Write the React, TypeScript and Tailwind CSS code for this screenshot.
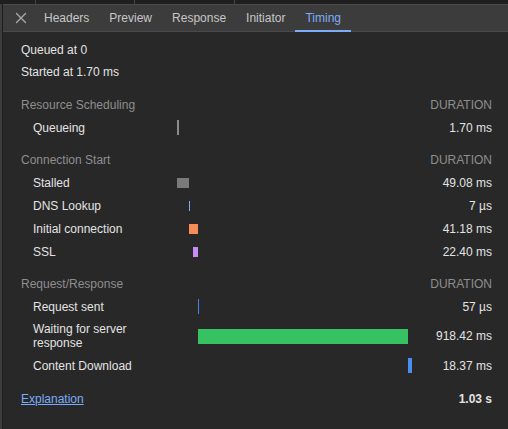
import React from 'react';

const TOTAL_MS = 1028.8;
const TRACK_PX = 235;

type Row = { label: string; start: number; end: number; color: string; min?: number; value: string };
type Section = { title: string; barH: string; rows: Row[] };

const sections: Section[] = [
  {
    title: 'Resource Scheduling',
    barH: 'h-[15px]',
    rows: [{ label: 'Queueing', start: 0, end: 1.7, color: 'bg-[#8b8b8b]', min: 2, value: '1.70 ms' }],
  },
  {
    title: 'Connection Start',
    barH: 'h-[10px]',
    rows: [
      { label: 'Stalled', start: 1.7, end: 50.78, color: 'bg-[#7a7a7a]', value: '49.08 ms' },
      { label: 'DNS Lookup', start: 50.78, end: 50.787, color: 'bg-[#7cacf8]', value: '7 µs' },
      { label: 'Initial connection', start: 50.78, end: 91.96, color: 'bg-[#f58d58]', value: '41.18 ms' },
      { label: 'SSL', start: 69.56, end: 91.96, color: 'bg-[#c98bf5]', value: '22.40 ms' },
    ],
  },
  {
    title: 'Request/Response',
    barH: 'h-[15px]',
    rows: [
      { label: 'Request sent', start: 91.96, end: 92.02, color: 'bg-[#3e86f0]', value: '57 µs' },
      { label: 'Waiting for server response', start: 92.02, end: 1010.44, color: 'bg-[#36c263]', value: '918.42 ms' },
      { label: 'Content Download', start: 1010.44, end: 1028.81, color: 'bg-[#4a8ff0]', value: '18.37 ms' },
    ],
  },
];

const toPx = (ms: number) => (ms / TOTAL_MS) * TRACK_PX;

const CloseIcon = () => (
  <svg width="12" height="12" viewBox="0 0 12 12" fill="none" stroke="#a8a8a8" strokeWidth="1.4" strokeLinecap="round">
    <path d="M1.5 1.5 L10.5 10.5 M10.5 1.5 L1.5 10.5" />
  </svg>
);

const tabs = ['Headers', 'Preview', 'Response', 'Initiator', 'Timing'];

const TimingRow: React.FC<{ row: Row; barH: string }> = ({ row, barH }) => {
  const left = toPx(row.start);
  const width = Math.max(row.min ?? 1, toPx(row.end - row.start));
  return (
    <div className="flex items-center min-h-[23px] pl-3 py-1">
      <div className="w-[144px] shrink-0 pr-5 leading-[14px] text-[#e3e3e3]">{row.label}</div>
      <div className="relative w-[235px] shrink-0 h-[15px] flex items-center">
        <div className={`absolute ${barH} ${row.color}`} style={{ left, width }} />
      </div>
      <div className="flex-1 text-right text-[#e3e3e3] leading-[14px]">{row.value}</div>
    </div>
  );
};

export default function App() {
  return (
    <div
      className="w-[508px] h-[429px] bg-[#282828] flex flex-col overflow-hidden text-[12px]"
      style={{ fontFamily: '"Liberation Sans", Arial, sans-serif' }}
    >
      <div className="h-[4px] bg-[#1f1f1f] flex shrink-0">
        <div className="w-[36px] border-r border-[#444]" />
        <div className="w-[99px] border-r border-[#444]" />
        <div className="w-[100px] border-r border-[#444]" />
      </div>
      <div className="flex flex-1 min-h-0">
        <div className="w-[3px] shrink-0 bg-[#3d3d3d] border-r border-[#1e1e1e]" />
        <div className="flex-1 flex flex-col min-w-0">
          <div className="h-[28px] shrink-0 bg-[#3c3c3c] border-t border-[#4a4a4a] border-b border-[#4a4a4a] flex items-stretch">
            <div className="w-[31px] flex items-center justify-center pl-[5px]">
              <CloseIcon />
            </div>
            {tabs.map((t) => {
              const active = t === 'Timing';
              return (
                <div
                  key={t}
                  className={`px-[10px] flex items-center relative ${active ? 'text-[#7cacf8]' : 'text-[#c7c7c7]'}`}
                >
                  {t}
                  {active && <div className="absolute left-0 right-0 bottom-[-1px] h-[2px] bg-[#7cacf8]" />}
                </div>
              );
            })}
          </div>

          <div className="pl-[18px] pr-[16px] pt-[7px]">
            <div className="leading-[22px] text-[#e3e3e3]">Queued at 0</div>
            <div className="leading-[22px] text-[#e3e3e3]">Started at 1.70 ms</div>

            {sections.map((s, i) => (
              <div key={s.title} className={i === 0 ? 'mt-[10px]' : 'mt-[9px]'}>
                <div className="flex items-center justify-between h-[23px] text-[#8e8e8e]">
                  <span>{s.title}</span>
                  <span>DURATION</span>
                </div>
                {s.rows.map((r) => (
                  <TimingRow key={r.label} row={r} barH={s.barH} />
                ))}
              </div>
            ))}

            <div className="mt-[10px] flex items-center justify-between h-[23px]">
              <span className="text-[#7cacf8] underline">Explanation</span>
              <span className="font-bold text-[#e3e3e3]">1.03 s</span>
            </div>
          </div>
        </div>
      </div>
    </div>
  );
}
